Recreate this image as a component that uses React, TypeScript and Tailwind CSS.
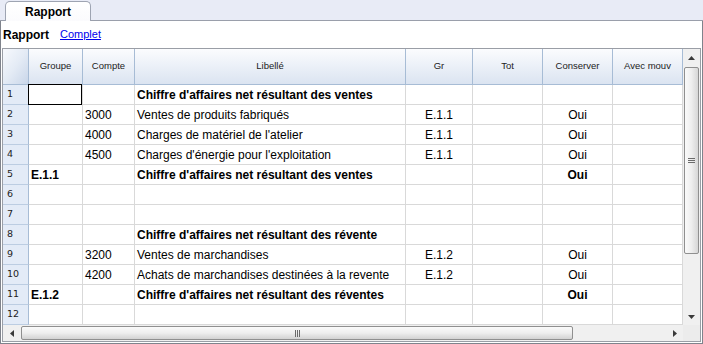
import React from "react";

type Row = {
  grp?: string;
  cpt?: string;
  lib?: string;
  gr?: string;
  cons?: string;
  bold?: boolean;
};

const rows: Row[] = [
  { lib: "Chiffre d'affaires net résultant des ventes", bold: true },
  { cpt: "3000", lib: "Ventes de produits fabriqués", gr: "E.1.1", cons: "Oui" },
  { cpt: "4000", lib: "Charges de matériel de l'atelier", gr: "E.1.1", cons: "Oui" },
  { cpt: "4500", lib: "Charges d'énergie pour l'exploitation", gr: "E.1.1", cons: "Oui" },
  { grp: "E.1.1", lib: "Chiffre d'affaires net résultant des ventes", cons: "Oui", bold: true },
  {},
  {},
  { lib: "Chiffre d'affaires net résultant des révente", bold: true },
  { cpt: "3200", lib: "Ventes de marchandises", gr: "E.1.2", cons: "Oui" },
  { cpt: "4200", lib: "Achats de marchandises destinées à la revente", gr: "E.1.2", cons: "Oui" },
  { grp: "E.1.2", lib: "Chiffre d'affaires net résultant des réventes", cons: "Oui", bold: true },
  {},
];

const headers = ["Groupe", "Compte", "Libellé", "Gr", "Tot", "Conserver", "Avec mouv"];

const GRID = "grid grid-cols-[26px_54px_52px_271px_67px_70px_70px_70px]";

function Arrow({ dir }: { dir: "up" | "down" | "left" | "right" }) {
  const pts =
    dir === "up"
      ? "0,4 3.5,0 7,4"
      : dir === "down"
      ? "0,0 7,0 3.5,4"
      : dir === "left"
      ? "4,0 4,7 0,3.5"
      : "0,0 0,7 4,3.5";
  const w = dir === "up" || dir === "down" ? 7 : 4;
  const h = dir === "up" || dir === "down" ? 4 : 7;
  return (
    <svg width={w} height={h} viewBox={`0 0 ${w} ${h}`}>
      <polygon points={pts} fill="#3a3a3a" />
    </svg>
  );
}

export default function App() {
  const font = { fontFamily: '"Liberation Sans", Arial, sans-serif' };
  return (
    <div className="w-[703px] h-[344px] bg-white overflow-hidden text-black" style={font}>
      {/* Tab bar */}
      <div className="h-[21px] bg-[#e8ebf6] border-b border-[#9a9fab] flex items-end pl-[5px]">
        <div className="w-[86px] h-[20px] -mb-px bg-gradient-to-b from-white to-[#fbfbfd] border border-b-0 border-[#9ea4b2] rounded-t-[5px] flex items-center justify-center text-[12px] font-bold">
          Rapport
        </div>
      </div>

      {/* Panel */}
      <div className="h-[323px] border-l border-r border-b border-[#7f838c] pl-px flex flex-col">
        <div className="h-[27px] flex items-center gap-[11px] pl-px">
          <span className="text-[12px] font-bold">Rapport</span>
          <span className="text-[11px] text-[#0000ee] underline">Complet</span>
        </div>

        {/* Grid */}
        <div className="w-[699px] h-[294px] border border-[#9a9ea6] flex flex-col">
          <div className="flex h-[276px]">
            <div className="w-[680px] flex flex-col">
              {/* Header */}
              <div className={`${GRID} h-[36px]`}>
                <div className="border-r border-b border-[#a7bcd5] bg-gradient-to-br from-[#f7f9fd] via-[#e4ebf5] to-[#c9d6e9]" />
                {headers.map((h) => (
                  <div
                    key={h}
                    className="border-r border-b border-[#a7bcd5] bg-gradient-to-b from-[#fbfcfe] to-[#dbe4f1] flex items-center justify-center text-[9.5px] text-[#222] overflow-hidden whitespace-nowrap"
                  >
                    {h}
                  </div>
                ))}
              </div>
              {/* Rows */}
              {rows.map((r, i) => (
                <div key={i} className={`${GRID} h-[20px] text-[12px]`}>
                  <div
                    className="bg-[#e3ebf7] border-r border-[#a7bcd5] border-b border-b-[#bccde2] flex items-center pl-[4px] text-[9.5px] text-[#222]"
                    style={{ fontFamily: '"DejaVu Sans", sans-serif' }}
                  >
                    {i + 1}
                  </div>
                  <div className="border-r border-b border-[#d9d9d9] flex items-center pl-[2px] font-bold relative">
                    {r.grp}
                    {i === 0 && (
                      <div className="absolute -left-px -top-px w-[54px] h-[21px] border border-black" />
                    )}
                  </div>
                  <div className="border-r border-b border-[#d9d9d9] flex items-center pl-[2px]">{r.cpt}</div>
                  <div
                    className={`border-r border-b border-[#d9d9d9] flex items-center pl-[2px] whitespace-nowrap overflow-hidden ${
                      r.bold ? "font-bold" : ""
                    }`}
                  >
                    {r.lib}
                  </div>
                  <div className="border-r border-b border-[#d9d9d9] flex items-center justify-center">{r.gr}</div>
                  <div className="border-r border-b border-[#d9d9d9]" />
                  <div
                    className={`border-r border-b border-[#d9d9d9] flex items-center justify-center ${
                      r.bold ? "font-bold" : ""
                    }`}
                  >
                    {r.cons}
                  </div>
                  <div className="border-r border-b border-[#d9d9d9]" />
                </div>
              ))}
            </div>

            {/* Vertical scrollbar */}
            <div className="w-[17px] bg-[#f0f0f0] flex flex-col">
              <div className="h-[17px] flex items-center justify-center">
                <Arrow dir="up" />
              </div>
              <div className="mt-px mx-px h-[187px] rounded-[2px] border border-[#8f8f8f] bg-gradient-to-r from-[#fafafa] via-[#eeeeee] to-[#d6d6d6] flex items-center justify-center">
                <div className="flex flex-col gap-px">
                  <div className="w-[7px] h-px bg-[#6b6b6b]" />
                  <div className="w-[7px] h-px bg-[#6b6b6b]" />
                  <div className="w-[7px] h-px bg-[#6b6b6b]" />
                </div>
              </div>
              <div className="flex-1" />
              <div className="h-[17px] flex items-center justify-center">
                <Arrow dir="down" />
              </div>
            </div>
          </div>

          {/* Horizontal scrollbar */}
          <div className="flex h-[16px]">
            <div className="w-[680px] bg-[#f0f0f0] flex items-center">
              <div className="w-[17px] h-full flex items-center justify-center">
                <Arrow dir="left" />
              </div>
              <div className="ml-px w-[552px] h-[14px] rounded-[2px] border border-[#8f8f8f] bg-gradient-to-b from-[#fafafa] via-[#eeeeee] to-[#d2d2d2] flex items-center justify-center">
                <div className="flex gap-px">
                  <div className="w-px h-[7px] bg-[#6b6b6b]" />
                  <div className="w-px h-[7px] bg-[#6b6b6b]" />
                  <div className="w-px h-[7px] bg-[#6b6b6b]" />
                </div>
              </div>
              <div className="flex-1" />
              <div className="w-[17px] h-full flex items-center justify-center">
                <Arrow dir="right" />
              </div>
            </div>
            <div className="w-[17px] bg-[#ececec]" />
          </div>
        </div>
      </div>
    </div>
  );
}
